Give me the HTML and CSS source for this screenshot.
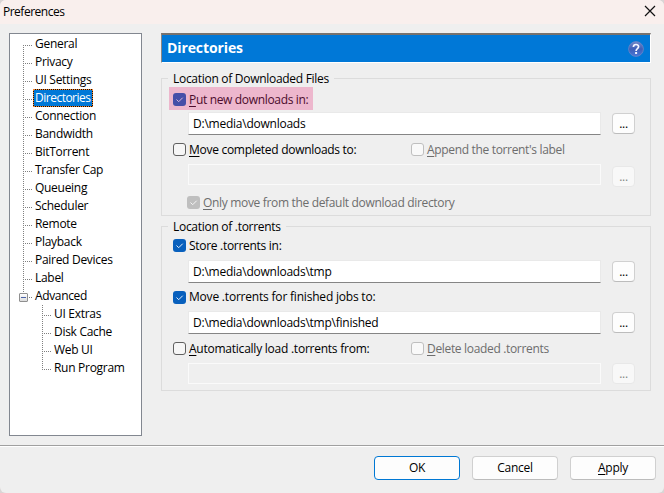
FILE: index.html
```html
<!DOCTYPE html>
<html lang="en">
<head>
<meta charset="utf-8">
<title>Preferences</title>
<link rel="stylesheet" href="styles.css">
</head>
<body>
<div class="window">
  <header class="titlebar">
    <span>Preferences</span>
    <svg class="close" width="12" height="12" viewBox="0 0 12 12"><path d="M1 1L11 11M11 1L1 11" stroke="#111" stroke-width="1.2" fill="none"/></svg>
  </header>
  <main class="content">
    <nav class="tree">
      <ul class="root">
        <li><span>General</span></li>
        <li><span>Privacy</span></li>
        <li><span>UI Settings</span></li>
        <li><span class="selected">Directories</span></li>
        <li><span>Connection</span></li>
        <li><span>Bandwidth</span></li>
        <li><span>BitTorrent</span></li>
        <li><span>Transfer Cap</span></li>
        <li><span>Queueing</span></li>
        <li><span>Scheduler</span></li>
        <li><span>Remote</span></li>
        <li><span>Playback</span></li>
        <li><span>Paired Devices</span></li>
        <li><span>Label</span></li>
        <li class="parent"><i class="toggle"></i><span>Advanced</span></li>
      </ul>
      <ul class="children">
        <li><span>UI Extras</span></li>
        <li><span>Disk Cache</span></li>
        <li><span>Web UI</span></li>
        <li><span>Run Program</span></li>
      </ul>
    </nav>
    <section class="page">
      <div class="banner">
        <h1>Directories</h1>
        <svg width="16" height="16" viewBox="0 0 16 16"><defs><linearGradient id="help" x1="0" y1="0" x2="0" y2="1"><stop offset="0" stop-color="#7289c9"/><stop offset=".5" stop-color="#3e5fb8"/><stop offset="1" stop-color="#4a78d8"/></linearGradient></defs><circle cx="8" cy="8" r="7.4" fill="url(#help)" stroke="#6b86c6" stroke-width=".8"/><path d="M5.4 6C5.4 2.7 10.7 2.7 10.6 5.8C10.5 7.7 8.1 7.6 8.1 10" fill="none" stroke="#f4f6ff" stroke-width="1.7"/><rect x="7.1" y="11" width="2" height="2" fill="#f4f6ff"/></svg>
      </div>

      <div class="group downloads">
        <h2>Location of Downloaded Files</h2>
        <div class="line first">
          <label class="check marked"><svg class="box on" viewBox="0 0 13 13"><path d="M3.5 6.5L5.7 8.7L9.7 4.7"/></svg><span><u>P</u>ut new downloads in:</span></label>
        </div>
        <div class="field"><div class="input">D:\media\downloads</div><button class="browse">...</button></div>
        <div class="line">
          <label class="check"><i class="box"></i><span><u>M</u>ove completed downloads to:</span></label>
          <label class="check off"><i class="box"></i><span><u>A</u>ppend the torrent's label</span></label>
        </div>
        <div class="field"><div class="input disabled"></div><button class="browse low" disabled>...</button></div>
        <div class="line indent">
          <label class="check off"><svg class="box on" viewBox="0 0 13 13"><path d="M3.5 6.5L5.7 8.7L9.7 4.7"/></svg><span><u>O</u>nly move from the default download directory</span></label>
        </div>
      </div>

      <div class="group torrents">
        <h2>Location of .torrents</h2>
        <div class="line first">
          <label class="check"><svg class="box on" viewBox="0 0 13 13"><path d="M3.5 6.5L5.7 8.7L9.7 4.7"/></svg><span>Store .torrents in:</span></label>
        </div>
        <div class="field"><div class="input">D:\media\downloads\tmp</div><button class="browse">...</button></div>
        <div class="line">
          <label class="check wide"><svg class="box on" viewBox="0 0 13 13"><path d="M3.5 6.5L5.7 8.7L9.7 4.7"/></svg><span>Move .torrents for finished jobs to:</span></label>
        </div>
        <div class="field"><div class="input">D:\media\downloads\tmp\finished</div><button class="browse">...</button></div>
        <div class="line">
          <label class="check auto"><i class="box"></i><span><u>A</u>utomatically load .torrents from:</span></label>
          <label class="check off"><i class="box"></i><span><u>D</u>elete loaded .torrents</span></label>
        </div>
        <div class="field last"><div class="input disabled"></div><button class="browse" disabled>...</button></div>
      </div>
    </section>
  </main>
  <footer class="actions">
    <button class="default">OK</button>
    <button>Cancel</button>
    <button><u>A</u>pply</button>
  </footer>
</div>
</body>
</html>
```

FILE: styles.css
```css
* { box-sizing: border-box; }
body, h1, h2, ul { margin: 0; padding: 0; }
body {
  width: 664px;
  height: 493px;
  overflow: hidden;
  background: #d9d5d5;
  font: 12px/18px "Open Sans", "Noto Sans", sans-serif;
  letter-spacing: -0.29px;
  color: #000;
}
u { text-decoration: underline; text-underline-offset: 2px; text-decoration-thickness: 1px; text-decoration-skip-ink: none; }
button { font: inherit; letter-spacing: inherit; color: inherit; padding: 0; }

.window {
  display: flex;
  flex-direction: column;
  height: 493px;
  background: #efefef;
  border-radius: 6px;
  overflow: hidden;
}
.titlebar {
  display: flex;
  align-items: center;
  justify-content: space-between;
  height: 24px;
  padding: 0 8px 0 3px;
  background: #f9efed;
  letter-spacing: -0.5px;
}
.close { margin-top: -2px; }
.content {
  display: flex;
  gap: 19px;
  height: 421px;
  padding: 9px 13px 9px 9px;
}

/* Category tree */
.tree {
  flex: none;
  width: 133px;
  border: 1px solid #828790;
  background: #fff;
  padding-top: 1px;
}
.tree ul { list-style: none; }
.tree li { display: flex; align-items: center; height: 18px; }
.tree li span { height: 18px; padding: 0 2px; line-height: 18px; white-space: nowrap; }
.tree li::before {
  content: "";
  width: 9px;
  height: 1px;
  margin: 3px 1px 0 0;
  background: repeating-linear-gradient(90deg, #808080 0 1px, transparent 1px 2px);
}
.root, .children { background: repeating-linear-gradient(#808080 0 1px, transparent 1px 2px) no-repeat; }
.root { padding-left: 13px; background-size: 1px 248px; background-position: 13px 10px; }
.children { padding-left: 32px; background-size: 1px 65px; background-position: 32px 0; }
.tree .parent::before { width: 3px; margin-left: 1px; order: 1; }
.tree .parent span { order: 2; letter-spacing: -0.35px; }
.toggle {
  width: 9px;
  height: 9px;
  margin: 3px 0 0 -4px;
  border: 1px solid #8f8f8f;
  border-radius: 1px;
  background: linear-gradient(#4b63a7, #4b63a7) center / 5px 1px no-repeat, linear-gradient(#fff, #dcdcdc);
}
.tree .selected { color: #fff; background: #0078d7; box-shadow: inset 0 0 0 1px #101010; outline: 1px dotted #ff8728; outline-offset: -1px; letter-spacing: -0.5px; }

/* Page */
.page { flex: none; width: 490px; }
.banner {
  display: flex;
  align-items: center;
  justify-content: space-between;
  height: 30px;
  padding: 0 6px 0 4px;
  border: solid;
  border-width: 2px 1px 1px 1px;
  border-color: #77726e #fff #fff #8a8682;
  background: #0078d7;
}
.banner h1 { color: #fff; font-size: 14px; line-height: 24px; font-weight: 700; letter-spacing: -0.1px; padding-left: 1px; margin-top: -2px; }

.group { border: 1px solid #dcdcdc; padding: 0 15px 0 11px; }
.downloads { height: 138px; margin-top: 15px; }
.torrents { height: 165px; margin-top: 10px; }
.group h2 {
  width: max-content;
  height: 18px;
  margin: -9px 0 0 -5px;
  padding: 0 5px;
  background: #efefef;
  font-size: 12px;
  line-height: 18px;
  font-weight: 400;
}
.line { display: flex; align-items: center; height: 28px; }
.line.first { height: 24px; align-items: flex-start; }
.line.first .check { margin-top: -2px; }
.line.indent { height: 31px; padding: 2px 0 0 14px; }
.check { flex: none; display: flex; align-items: center; gap: 3px; width: 238px; height: 23px; white-space: nowrap; line-height: 19px; }
.check.wide { letter-spacing: -0.2px; line-height: 18px; }
.check.auto { letter-spacing: -0.24px; }
.line.first .marked { width: 144px; margin: -1px 0 0 -4px; padding: 2px 0 0 4px; background: #edb7cd; color: #4b0b2c; letter-spacing: -0.33px; }
.box { flex: none; width: 13px; height: 13px; border: 1px solid #606060; border-radius: 3px; background: #f6f6f6; }
.box.on { border: 0; background: #0860bd; }
.box path { fill: none; stroke: #e4eefa; stroke-width: 1; }
.marked .box.on { background: #464fa8; }
.marked .box path { stroke: #dcb7dc; }
.off { color: #6d6d6d; letter-spacing: -0.33px; }
.off .box { border-color: #bfbfbf; background: #f9f9f9; }
.off .box.on { background: #bfbfbf; }
.off .box path { stroke: #f5f5f5; }

.field { display: flex; align-items: center; gap: 11px; height: 23px; padding-left: 15px; }
.field.last { height: 21px; margin-top: 1px; }
.input {
  width: 413px;
  height: 23px;
  padding-left: 4px;
  border: 1px solid #e9e9e9;
  border-bottom-color: #858585;
  background: #fff;
  line-height: 21px;
  letter-spacing: -0.24px;
}
.input.disabled { height: 21px; border-color: #fafafa; background: #efefef; }
.browse {
  width: 23px;
  height: 21px;
  border: 1px solid #d0d0d0;
  border-bottom-color: #bcbcbc;
  border-radius: 4px;
  background: #fdfdfd;
  line-height: 19px;
}
.browse.low { margin-top: 3px; }
.browse:disabled { border-color: #e8e8e8; background: #f8f8f8; color: #858585; }

/* Dialog buttons */
.actions {
  display: flex;
  justify-content: flex-end;
  gap: 12px;
  height: 48px;
  padding: 10px 8px 0;
  border-top: 1px solid #a0a0a0;
  box-shadow: inset 0 1px #fff;
}
.actions button {
  width: 86px;
  height: 24px;
  border: 1px solid #d0d0d0;
  border-bottom-color: #bcbcbc;
  border-radius: 4px;
  background: #fdfdfd;
  line-height: 22px;
}
.actions .default { border-color: #0078d4; }
```
